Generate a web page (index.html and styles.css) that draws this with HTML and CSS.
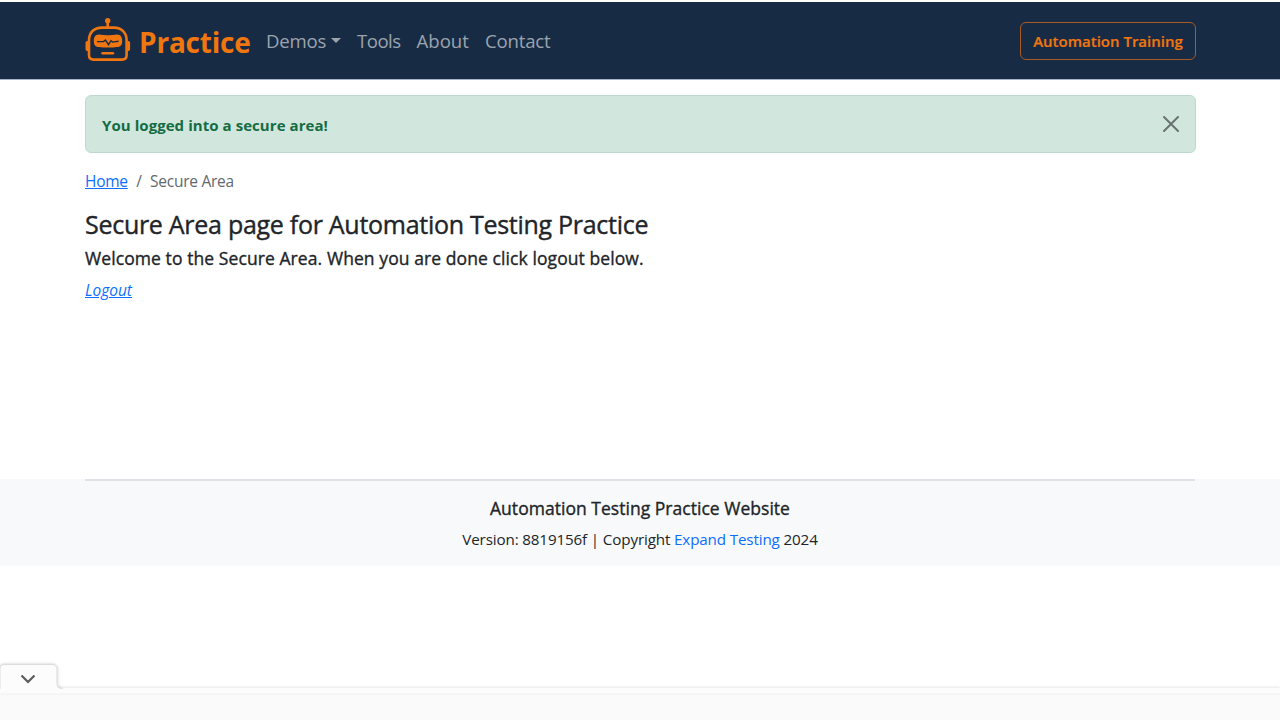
FILE: index.html
```
<!DOCTYPE html>
<html lang="en">
<head>
<meta charset="utf-8">
<title>Secure Area page for Automation Testing Practice</title>
<link rel="stylesheet" href="styles.css">
</head>
<body>
<header class="navbar">
  <div class="container navbar-inner">
    <a class="brand" href="#">
      <svg class="brand-icon" width="46" height="46" viewBox="0 0 46 46" fill="none" stroke="#f0760f" stroke-width="2.6">
        <path d="M22.700 5v6"/>
        <circle cx="22.700" cy="3.800" r="2.700" fill="#f0760f" stroke="none"/>
        <path d="M17 10.600h12c7.500 0 12.600 5 12.600 12.600V38c0 3-1.600 4.600-4.600 4.600H8.600C5.600 42.600 4 41 4 38V23.200C4 15.600 9 10.600 17 10.600Z"/>
        <path d="M3 24H2C1 24 .5 25 .5 26v5.500C.5 33 1 34 2 34h1ZM42.600 24h1c1 0 1.500 1 1.500 2v5.500c0 1.500-.5 2.500-1.500 2.500h-1Z" fill="#f0760f" stroke="none"/>
        <path d="M14 17.600Q23 19 32 17.600C36 17.600 37.200 20.500 37.200 24S36 30 32 30Q23 31 14 30C10 30 8.800 27.500 8.800 24S10 17.600 14 17.600Z" fill="#f0760f" stroke="none"/>
        <path d="M12 24.600h6.500l2-1.500 3 4.600 2.500-4 1.600 1.400 6-.8" stroke="#182b45" stroke-width="1.400"/>
        <path d="M17.500 36.300h10.500" stroke-width="2.400" stroke-linecap="round"/>
      </svg>
      <span class="brand-text">Practice</span>
    </a>
    <nav class="nav">
      <a class="nav-link demos" href="#"><span>Demos</span><i class="caret"></i></a>
      <a class="nav-link tools" href="#">Tools</a>
      <a class="nav-link about" href="#">About</a>
      <a class="nav-link contact" href="#">Contact</a>
    </nav>
    <a class="training" href="#">Automation Training</a>
  </div>
</header>
<main class="container">
  <div class="alert">
    <b class="alert-text">You logged into a secure area!</b>
    <svg class="close" width="16" height="16" viewBox="0 0 16 16" stroke="#687370" stroke-width="2" stroke-linecap="round"><path d="M1 1l14 14M15 1L1 15"/></svg>
  </div>
  <nav class="breadcrumb">
    <a class="home" href="#">Home</a><span class="slash">/</span><span class="current">Secure Area</span>
  </nav>
  <h1 class="title">Secure Area page for Automation Testing Practice</h1>
  <h2 class="subtitle">Welcome to the Secure Area. When you are done click logout below.</h2>
  <a class="logout" href="#">Logout</a>
</main>
<footer class="footer">
  <div class="container footer-inner">
    <h3 class="footer-title">Automation Testing Practice Website</h3>
    <p class="footer-text">Version: 8819156f | Copyright <a class="footer-link" href="#">Expand Testing</a> 2024</p>
  </div>
</footer>
<div class="anchor-ad">
  <svg class="ad-shape" width="1280" height="60" viewBox="0 0 1280 60">
    <path class="ad-strip" d="M0 28H1280V60H0Z"/>
    <path class="ad-tab" d="M0 30V8Q0 4.500 4 4.500H52Q57 4.500 57 9.500V23Q57 28.500 62 28.500V30Z"/>
    <path d="M0 29H1280V36H0Z" fill="#fcfcfc"/>
    <path class="ad-body" d="M0 35H1280V60H0Z"/>
    <path d="M21.500 15.500l6.500 6.500 6.500-6.500" fill="none" stroke="#5b5b5b" stroke-width="2.200"/>
  </svg>
</div>
</body>
</html>
```
FILE: styles.css
```
* { box-sizing: border-box; }
body {
  margin: 0;
  padding-top: 2px;
  height: 720px;
  overflow: hidden;
  background: #fff;
  color: #212529;
  font-family: "Open Sans", "Noto Sans", sans-serif;
  font-size: 15.5px;
  line-height: 24px;
}
a { color: #0d6efd; }
h1, h2, h3, p { margin: 0; }
.container { width: 1110px; margin: 0 auto; }
.navbar { height: 78px; background: #182b45; border-bottom: 1px solid #a7b3c4; }
.navbar-inner { display: flex; align-items: center; height: 77px; }
.brand { display: flex; width: 173px; gap: 8px; color: #f0760f; text-decoration: none; }
.brand-icon { flex: none; margin-top: 0; }
.brand-text { font-size: 28px; font-weight: 700; line-height: 46px; margin-top: 2px; letter-spacing: -0.2px; }
.nav { display: flex; flex: 1; padding-left: 8px; }
.nav-link { color: #9ba4ad; font-size: 18.600px; line-height: 30px; text-decoration: none; white-space: nowrap; letter-spacing: -0.200px; }
.demos { display: flex; align-items: center; justify-content: space-between; width: 75px; margin-right: 16px; }
.caret { border: 5px solid transparent; border-top-color: #9ba4ad; border-bottom: 0; }
.tools { width: 59.500px; letter-spacing: -0.500px; }
.about { width: 68.500px; letter-spacing: 0; }
.contact { width: 66px; }
.training { width: 176px; height: 38px; padding-top: 6px; border: 1px solid #a85a24; border-radius: 6px; color: #f0760f; font-size: 15px; font-weight: 600; line-height: 24px; text-align: center; text-decoration: none; white-space: nowrap; margin-right: -1px; margin-top: 1px; -webkit-text-stroke: 0.2px; }
.alert { display: flex; justify-content: space-between; width: 1111px; height: 58px; margin-top: 15px; padding: 17px 16px; border: 1px solid #badbcc; border-radius: 6px; background: #d1e7dd; color: #146c43; }
.alert-text { font-size: 15px; font-weight: 700; line-height: 24px; letter-spacing: 0.060px; }
.close { margin-top: 3px; }
.breadcrumb { display: flex; margin-top: 16px; font-size: 15.500px; letter-spacing: -0.250px; color: #62696f; }
.home { width: 43px; }
.slash { width: 22px; text-align: center; }
.title { margin-top: 16px; font-size: 25px; font-weight: 500; line-height: 31px; letter-spacing: -0.280px; white-space: nowrap; -webkit-text-stroke: 0.4px; }
.subtitle { margin-top: 7px; font-size: 17.500px; font-weight: 500; line-height: 22px; letter-spacing: 0.085px; white-space: nowrap; -webkit-text-stroke: 0.350px; }
.logout { display: block; margin-top: 9px; font-size: 15.500px; font-style: italic; width: max-content; }
.footer { height: 87px; margin-top: 177px; background: #f8f9fa; }
.footer-inner { border-top: 2px solid #dee2e6; text-align: center; padding-top: 16px; }
.footer-title { font-size: 17.500px; font-weight: 500; line-height: 22px; letter-spacing: 0.030px; -webkit-text-stroke: 0.350px; }
.footer-text { margin-top: 8px; font-size: 15.200px; letter-spacing: -0.140px; }
.footer-link { text-decoration: none; }
.anchor-ad { position: absolute; left: 0; bottom: 0; width: 1280px; height: 60px; }
.ad-shape { display: block; }
.ad-strip { fill: #fcfcfc; filter: drop-shadow(0 -1px 1px #e8e8e8); }
.ad-tab { fill: #fcfcfc; stroke: #ddd; filter: drop-shadow(0 0 1.500px #ccc); }
.ad-body { fill: #fafafa; filter: drop-shadow(0 -1px 1px #eee); }
```
